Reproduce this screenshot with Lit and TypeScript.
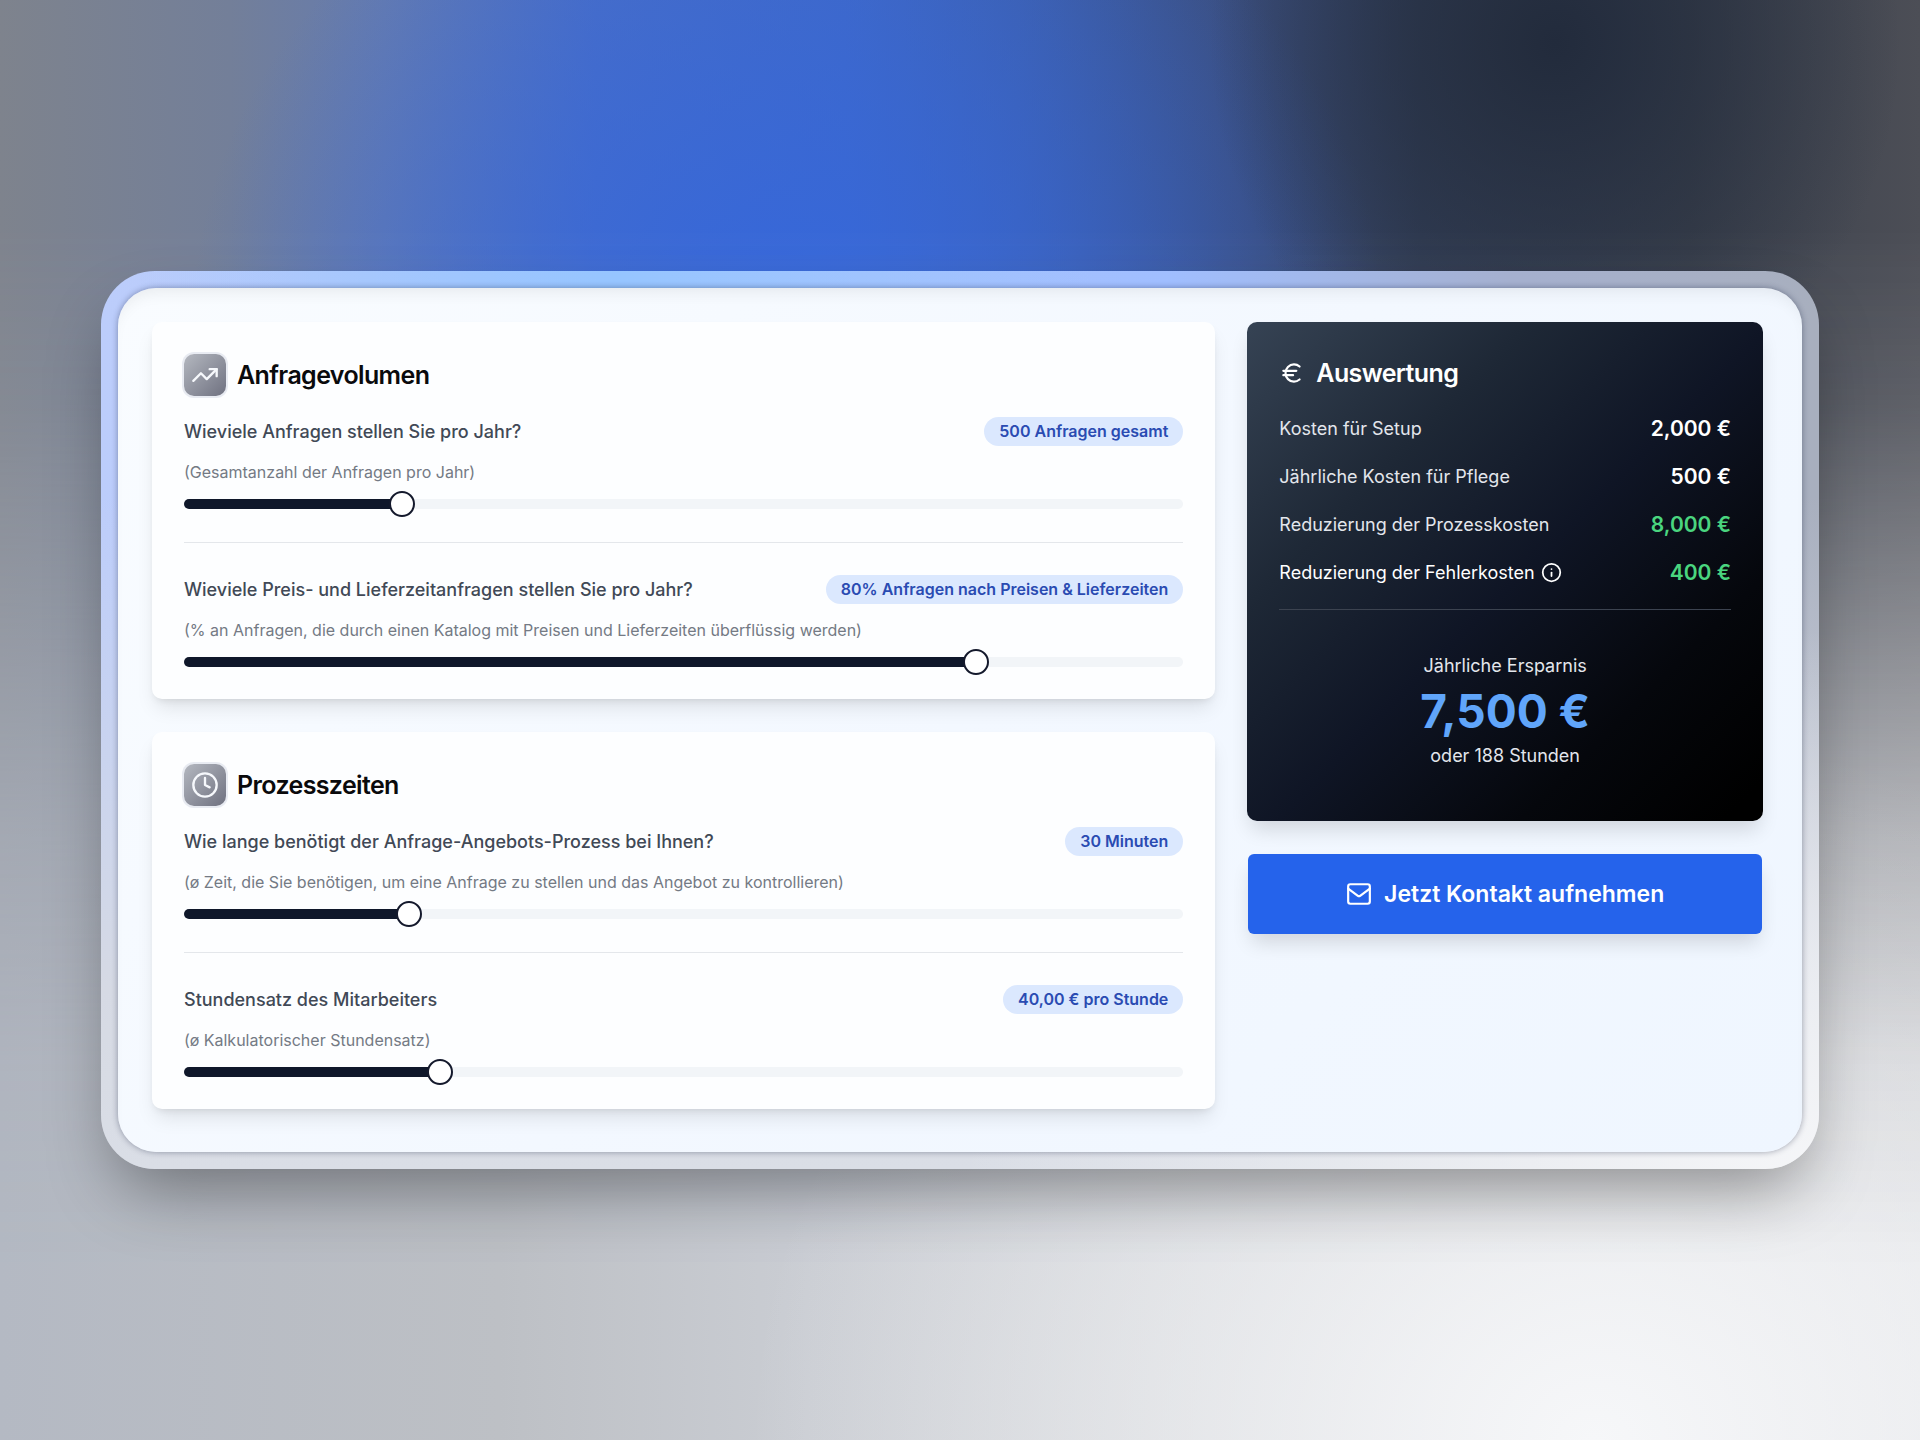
import { LitElement, html, css, svg } from "lit";
import { customElement, state } from "lit/decorators.js";

interface SliderSpec {
  id: string;
  question: string;
  hint: string;
  min: number;
  max: number;
  step: number;
  badge: (value: number) => string;
}

const euro = (value: number) => `${Math.round(value).toLocaleString("en-US")} €`;

const volumeSliders: SliderSpec[] = [
  {
    id: "requests",
    question: "Wieviele Anfragen stellen Sie pro Jahr?",
    hint: "(Gesamtanzahl der Anfragen pro Jahr)",
    min: 100,
    max: 2000,
    step: 10,
    badge: (v) => `${v} Anfragen gesamt`,
  },
  {
    id: "share",
    question: "Wieviele Preis- und Lieferzeitanfragen stellen Sie pro Jahr?",
    hint: "(% an Anfragen, die durch einen Katalog mit Preisen und Lieferzeiten überflüssig werden)",
    min: 0,
    max: 100,
    step: 1,
    badge: (v) => `${v}% Anfragen nach Preisen & Lieferzeiten`,
  },
];

const timeSliders: SliderSpec[] = [
  {
    id: "minutes",
    question: "Wie lange benötigt der Anfrage-Angebots-Prozess bei Ihnen?",
    hint: "(ø Zeit, die Sie benötigen, um eine Anfrage zu stellen und das Angebot zu kontrollieren)",
    min: 5,
    max: 120,
    step: 1,
    badge: (v) => `${v} Minuten`,
  },
  {
    id: "rate",
    question: "Stundensatz des Mitarbeiters",
    hint: "(ø Kalkulatorischer Stundensatz)",
    min: 20,
    max: 100,
    step: 1,
    badge: (v) => `${v},00 € pro Stunde`,
  },
];

const icons = {
  trend: svg`<path d="M22 7 13.5 15.5 8.5 10.5 2 17"/><path d="M16 7h6v6"/>`,
  clock: svg`<circle cx="12" cy="12" r="10"/><path d="M12 6v6l4 2"/>`,
  euro: svg`<path d="M4 10h12"/><path d="M4 14h9"/><path d="M19 6a7.7 7.7 0 0 0-5.2-2A7.9 7.9 0 0 0 6 12c0 4.4 3.5 8 7.8 8 2 0 3.8-.8 5.2-2"/>`,
  info: svg`<circle cx="12" cy="12" r="10"/><path d="M12 16v-4"/><path d="M12 8h.01"/>`,
  mail: svg`<rect x="2" y="3" width="20" height="18" rx="2"/><path d="m2 7 8.97 6.7a1.94 1.94 0 0 0 2.06 0L22 7"/>`,
};

@customElement("app-root")
export class AppRoot extends LitElement {
  @state() private values: Record<string, number> = {
    requests: 500,
    share: 80,
    minutes: 30,
    rate: 40,
  };

  static styles = css`
    :host {
      display: flex;
      align-items: center;
      justify-content: center;
      box-sizing: border-box;
      min-height: 100vh;
      padding: 40px 101px;
      position: relative;
      isolation: isolate;
      font-family: Inter, "Liberation Sans", sans-serif;
      background:
        radial-gradient(44% 50% at 83% 100%, #f6f7f9 0%, rgba(246, 247, 249, 0) 100%),
        linear-gradient(90deg, #b4b9c3 0%, #bdc0c5 26%, #cacdd3 42%, #d3d5d9 60%, #e2e3e6 100%);
    }
    * {
      box-sizing: border-box;
    }
    .sky {
      position: absolute;
      inset: 0;
      z-index: -1;
      background:
        radial-gradient(18% 26% at 81% 3%, #222b3c 0%, rgba(34, 43, 60, 0) 100%),
        radial-gradient(31% 36% at 41% 22%, rgba(53, 103, 220, 0.95) 0%, rgba(53, 103, 220, 0.55) 45%, rgba(53, 103, 220, 0) 100%),
        linear-gradient(90deg, #7e838d 0%, #737f99 12%, #647bb0 20%, #4a6ec4 31%, #4169c4 44%, #3e60ac 53%, #3b4f80 64%, #333f58 74%, #3a404c 88%, #4c4e56 100%);
      -webkit-mask-image: linear-gradient(180deg, #000 16%, rgba(0, 0, 0, 0.88) 28%, rgba(0, 0, 0, 0.62) 42%, rgba(0, 0, 0, 0.3) 58%, rgba(0, 0, 0, 0.08) 74%, transparent 88%);
      mask-image: linear-gradient(180deg, #000 16%, rgba(0, 0, 0, 0.88) 28%, rgba(0, 0, 0, 0.62) 42%, rgba(0, 0, 0, 0.3) 58%, rgba(0, 0, 0, 0.08) 74%, transparent 88%);
    }
    .frame {
      flex: 1;
      padding: 17px;
      border-radius: 54px;
      background:
        radial-gradient(28% 40% at 30% 0%, #96c5ff 0%, rgba(150, 197, 255, 0) 100%),
        radial-gradient(50% 60% at 100% 100%, #f5f6f8 0%, rgba(245, 246, 248, 0) 100%),
        linear-gradient(180deg, rgba(214, 218, 227, 0) 25%, #d6dae4 80%, #dadee6 100%),
        linear-gradient(90deg, #bccdfb 0%, #a0beff 62%, #a5b0cf 82%, #a8afbe 100%);
      box-shadow: 0 34px 68px -16px rgba(0, 0, 0, 0.4);
    }
    .panel {
      display: grid;
      grid-template-columns: repeat(3, minmax(0, 1fr));
      align-items: start;
      gap: 32px;
      padding: 34px 39px 43px 34px;
      border-radius: 38px;
      background: linear-gradient(135deg, #f9fcff 0%, #f3f8ff 50%, #eff6ff 100%);
      box-shadow:
        0 0 6px rgba(20, 30, 60, 0.4),
        inset 0 12px 16px -8px rgba(0, 0, 0, 0.07);
    }
    .inputs {
      grid-column: span 2;
      display: grid;
      gap: 33px;
    }
    .results {
      display: grid;
      gap: 33px;
    }
    .card {
      padding: 32px;
      border-radius: 10px;
      background: #fdfeff;
      box-shadow:
        0 12px 20px -4px rgba(0, 0, 0, 0.1),
        0 4px 8px -4px rgba(0, 0, 0, 0.12);
    }
    .title {
      margin: 0;
      display: flex;
      align-items: center;
      gap: 11px;
      height: 42px;
      font-size: 25px;
      font-weight: 600;
      letter-spacing: -0.025em;
      color: #0a0a0c;
    }
    .tile {
      display: grid;
      place-items: center;
      width: 42px;
      height: 42px;
      border-radius: 10px;
      background: linear-gradient(135deg, #b4b8c0 0%, #6f7180 100%);
      box-shadow: 0 0 0 2px #e8ebf2;
      color: #f6f8fc;
    }
    .icon {
      display: block;
      flex: none;
      fill: none;
      stroke: currentColor;
      stroke-width: 2;
      stroke-linecap: round;
      stroke-linejoin: round;
    }
    .field {
      margin-top: 21px;
    }
    .field + .field {
      margin-top: 33px;
      padding-top: 32px;
      border-top: 1px solid #e4e7eb;
    }
    .ask {
      display: flex;
      align-items: center;
      justify-content: space-between;
      gap: 16px;
      height: 29px;
      font-size: 18px;
      font-weight: 500;
      color: #414956;
    }
    .badge {
      flex: none;
      padding: 0 15px;
      border-radius: 15px;
      background: #dbe8fe;
      color: #2a4bb2;
      font-size: 16px;
      line-height: 29px;
      font-weight: 600;
    }
    .hint {
      margin: 16px 0;
      font-size: 16px;
      line-height: 21px;
      color: #747a84;
    }
    .slider {
      appearance: none;
      -webkit-appearance: none;
      display: block;
      width: 100%;
      height: 26px;
      margin: -8px 0;
      background: none;
      cursor: pointer;
    }
    .slider::-webkit-slider-runnable-track {
      height: 10px;
      border-radius: 5px;
      background: linear-gradient(#0f172a, #0f172a) 0 0 / calc(13px + (100% - 26px) * var(--ratio)) 100% no-repeat #f2f5f8;
    }
    .slider::-webkit-slider-thumb {
      -webkit-appearance: none;
      width: 26px;
      height: 26px;
      margin-top: -8px;
      border: 2px solid #14192c;
      border-radius: 50%;
      background: #fff;
    }
    .summary {
      padding: 32px;
      border-radius: 10px;
      background: linear-gradient(135deg, #364354 0%, #1e2836 28%, #0f1525 52%, #05070c 76%, #000 96%);
      box-shadow: 0 12px 20px -4px rgba(0, 0, 0, 0.14);
      color: #e3e6ec;
      font-size: 18px;
    }
    .summary-title {
      height: 37px;
      color: #fff;
    }
    .rows {
      display: grid;
      gap: 16px;
      margin: 21px 0;
    }
    .row {
      display: flex;
      align-items: center;
      justify-content: space-between;
      height: 32px;
    }
    .row dt {
      display: flex;
      align-items: center;
      gap: 6px;
    }
    .row dd {
      margin: 0;
      font-size: 21px;
      font-weight: 600;
      color: #fff;
    }
    .row .gain {
      color: #4ad57f;
    }
    .noted {
      color: #fff;
    }
    .total {
      padding: 43px 0 20px;
      border-top: 1px solid #3c4350;
      text-align: center;
      line-height: 26px;
    }
    .total p {
      margin: 0;
    }
    .total .amount {
      margin: 8px 0;
      font-size: 46px;
      line-height: 48px;
      font-weight: 700;
      color: #60a5fa;
    }
    .contact {
      display: flex;
      align-items: center;
      justify-content: center;
      gap: 12px;
      height: 80px;
      margin: 0 1px;
      padding: 0;
      border: 0;
      border-radius: 6px;
      background: #2563eb;
      box-shadow: 0 12px 20px -4px rgba(0, 0, 0, 0.14);
      color: #fff;
      font: 600 23px/32px Inter, "Liberation Sans", sans-serif;
      cursor: pointer;
    }
  `;

  private icon(shape: unknown, size: number) {
    return html`<svg class="icon" width=${size} height=${size} viewBox="0 0 24 24" aria-hidden="true">${shape}</svg>`;
  }

  private onInput(id: string, event: Event) {
    const value = Number((event.target as HTMLInputElement).value);
    this.values = { ...this.values, [id]: value };
  }

  private field(spec: SliderSpec) {
    const value = this.values[spec.id];
    const ratio = (value - spec.min) / (spec.max - spec.min);
    return html`
      <div class="field">
        <div class="ask">
          <label for=${spec.id}>${spec.question}</label>
          <output class="badge" for=${spec.id}>${spec.badge(value)}</output>
        </div>
        <p class="hint">${spec.hint}</p>
        <input
          class="slider"
          type="range"
          id=${spec.id}
          min=${spec.min}
          max=${spec.max}
          step=${spec.step}
          .value=${String(value)}
          style="--ratio: ${ratio}"
          @input=${(e: Event) => this.onInput(spec.id, e)}
        />
      </div>
    `;
  }

  private card(title: string, shape: unknown, sliders: SliderSpec[]) {
    return html`
      <section class="card">
        <h2 class="title"><span class="tile">${this.icon(shape, 28)}</span>${title}</h2>
        ${sliders.map((s) => this.field(s))}
      </section>
    `;
  }

  render() {
    const { requests, share, minutes, rate } = this.values;
    const setup = 2000;
    const upkeep = 500;
    const process = ((requests * share) / 100) * (minutes / 60) * rate;
    const errors = process * 0.05;
    const savings = process + errors - upkeep - setup / 5;

    return html`
      <div class="sky"></div>
      <main class="frame">
        <div class="panel">
          <div class="inputs">
            ${this.card("Anfragevolumen", icons.trend, volumeSliders)}
            ${this.card("Prozesszeiten", icons.clock, timeSliders)}
          </div>
          <div class="results">
            <section class="summary">
              <h2 class="title summary-title">${this.icon(icons.euro, 26)}Auswertung</h2>
              <dl class="rows">
                <div class="row"><dt>Kosten für Setup</dt><dd>${euro(setup)}</dd></div>
                <div class="row"><dt>Jährliche Kosten für Pflege</dt><dd>${euro(upkeep)}</dd></div>
                <div class="row"><dt>Reduzierung der Prozesskosten</dt><dd class="gain">${euro(process)}</dd></div>
                <div class="row">
                  <dt class="noted">Reduzierung der Fehlerkosten${this.icon(icons.info, 21)}</dt>
                  <dd class="gain">${euro(errors)}</dd>
                </div>
              </dl>
              <div class="total">
                <p>Jährliche Ersparnis</p>
                <p class="amount">${euro(savings)}</p>
                <p>oder ${Math.round(savings / rate)} Stunden</p>
              </div>
            </section>
            <button class="contact" type="button">${this.icon(icons.mail, 26)}Jetzt Kontakt aufnehmen</button>
          </div>
        </div>
      </main>
    `;
  }
}
